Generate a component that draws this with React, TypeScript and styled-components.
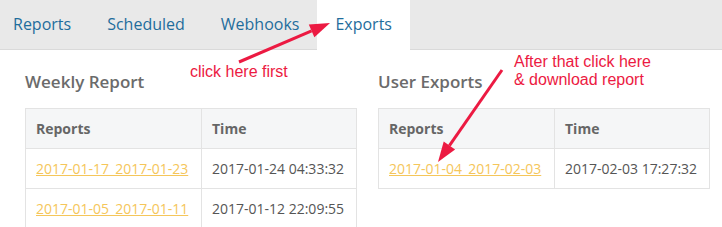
import styled, { createGlobalStyle } from 'styled-components';

const GlobalStyle = createGlobalStyle`
  body {
    margin: 0;
    font-family: 'Open Sans', 'DejaVu Sans', sans-serif;
    background: #fff;
  }
`;

interface Row {
  report: string;
  time: string;
}

const weekly: Row[] = [
  { report: '2017-01-17_2017-01-23', time: '2017-01-24 04:33:32' },
  { report: '2017-01-05_2017-01-11', time: '2017-01-12 22:09:55' },
];

const exportsRows: Row[] = [{ report: '2017-01-04_2017-02-03', time: '2017-02-03 17:27:32' }];

const tabs = ['Reports', 'Scheduled', 'Webhooks', 'Exports'];

const ReportTable = ({ title, rows }: { title: string; rows: Row[] }) => (
  <Section>
    <Heading>{title}</Heading>
    <Table>
      <thead>
        <tr>
          <Th $first>Reports</Th>
          <Th>Time</Th>
        </tr>
      </thead>
      <tbody>
        {rows.map((r) => (
          <tr key={r.report}>
            <Td>
              <Link href='#'>{r.report}</Link>
            </Td>
            <Td>{r.time}</Td>
          </tr>
        ))}
      </tbody>
    </Table>
  </Section>
);

const App = () => {
  return (
    <Page>
      <GlobalStyle />
      <TabBar>
        {tabs.map((t) => (
          <Tab key={t} $active={t === 'Exports'}>
            {t}
          </Tab>
        ))}
      </TabBar>
      <Content>
        <ReportTable title='Weekly Report' rows={weekly} />
        <ReportTable title='User Exports' rows={exportsRows} />
      </Content>

      <Note $left={190} $top={63}>click here first</Note>
      <Note $left={514} $top={53}>
        After that click here
        <br />& download report
      </Note>
      <Arrows width='722' height='227' viewBox='0 0 722 227'>
        <line x1='239' y1='62' x2='311.6' y2='30.9' />
        <polygon points='330,23 314.4,37.3 308.8,24.5' />
        <line x1='502' y1='70' x2='449.4' y2='145.6' />
        <polygon points='438,162 455.1,149.6 443.7,141.6' />
      </Arrows>
    </Page>
  );
};

const Page = styled.div`
  position: relative;
  width: 722px;
  height: 227px;
  overflow: hidden;
`;

const TabBar = styled.nav`
  display: flex;
  height: 49px;
  background: #e9e9e9;
  border-bottom: 1px solid #dadada;
`;

const Tab = styled.div<{ $active?: boolean }>`
  padding: 0 18px;
  height: ${(p) => (p.$active ? '50px' : '49px')};
  line-height: 49px;
  font-size: 16px;
  color: #1f6d9c;
  background: ${(p) => (p.$active ? '#fff' : 'transparent')};

  &:first-child {
    padding-left: 13px;
  }
`;

const Content = styled.div`
  display: grid;
  grid-template-columns: 332px 332px;
  gap: 21px;
  padding: 20px 0 0 25px;
`;

const Section = styled.section`
  display: flex;
  flex-direction: column;
  gap: 14px;
`;

const Heading = styled.h2`
  margin: 0;
  font-size: 17px;
  line-height: 24px;
  font-weight: 600;
  color: #6b6b6b;
`;

const Table = styled.table`
  width: 100%;
  border-collapse: collapse;
  border: 1px solid #e3e3e3;
  font-size: 14px;
`;

const Th = styled.th<{ $first?: boolean }>`
  width: ${(p) => (p.$first ? '176px' : 'auto')};
  height: 40px;
  padding: 0 10px;
  box-sizing: border-box;
  text-align: left;
  font-weight: 700;
  color: #666;
  background: #f5f6f7;
  border: 1px solid #e3e3e3;
`;

const Td = styled.td`
  height: 40px;
  padding: 0 10px;
  box-sizing: border-box;
  color: #555;
  border: 1px solid #e3e3e3;
`;

const Link = styled.a`
  color: #f5c65a;
  text-decoration: underline;
`;

const Note = styled.div<{ $left: number; $top: number }>`
  position: absolute;
  left: ${(p) => p.$left}px;
  top: ${(p) => p.$top}px;
  font-family: 'Liberation Sans', Arial, sans-serif;
  font-size: 16px;
  line-height: 18px;
  color: #ec1a42;
`;

const Arrows = styled.svg`
  position: absolute;
  left: 0;
  top: 0;
  pointer-events: none;

  line {
    stroke: #ec1a42;
    stroke-width: 3;
  }

  polygon {
    fill: #ec1a42;
  }
`;

export default App;
